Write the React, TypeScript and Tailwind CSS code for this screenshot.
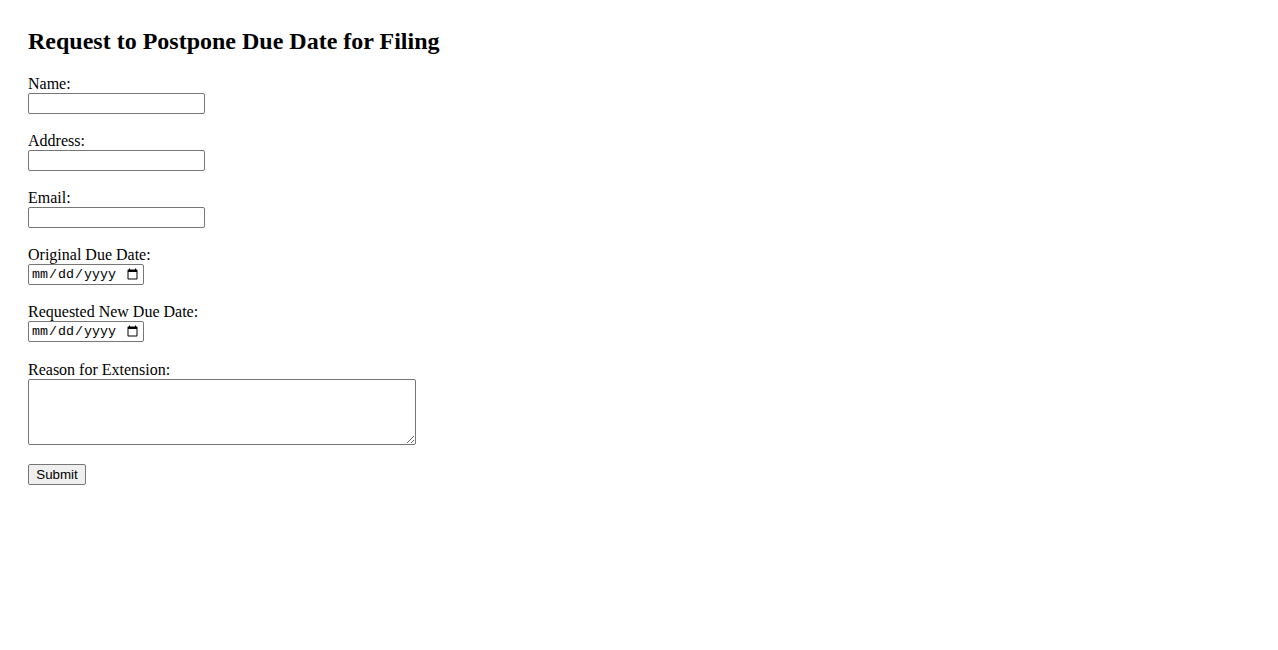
import React from "react";

export default function App() {
  const inputCls =
    "block w-[177px] h-[21px] border border-[#767676] rounded-[2px] px-[2px] py-[1px] text-[13.33px] bg-white";
  const dateCls =
    "block w-[116px] h-[21px] border border-[#767676] rounded-[2px] px-[2px] py-[1px] text-[13.33px] bg-white [font-family:'Liberation_Mono',monospace]";
  const labelCls = "block h-[18px] leading-[18px] text-[16px]";
  return (
    <div className="min-h-[650px] bg-white text-black px-[28px] pt-[27px] [font-family:'Liberation_Serif',serif]">
      <h2 className="text-[24px] font-bold leading-[28px] mb-[20px]">
        Request to Postpone Due Date for Filing
      </h2>
      <form className="flex flex-col">
        <label className={labelCls}>Name:</label>
        <input type="text" className={inputCls} />
        <div className="h-[18px]" />
        <label className={labelCls}>Address:</label>
        <input type="text" className={inputCls} />
        <div className="h-[18px]" />
        <label className={labelCls}>Email:</label>
        <input type="email" className={inputCls} />
        <div className="h-[18px]" />
        <label className={labelCls}>Original Due Date:</label>
        <input type="date" className={dateCls} />
        <div className="h-[18px]" />
        <label className={labelCls}>Requested New Due Date:</label>
        <input type="date" className={dateCls} />
        <div className="h-[19px]" />
        <label className={labelCls}>Reason for Extension:</label>
        <textarea className="block w-[388px] h-[66px] border border-[#767676] rounded-[2px] p-[2px] text-[13.33px] bg-white" />
        <div className="h-[19px]" />
        <div className="flex">
          <button
            type="button"
            className="h-[21px] w-[58px] border border-[#767676] rounded-[2px] bg-[#efefef] px-[6px] text-[13.33px] leading-[17px] [font-family:'Liberation_Sans',Arial,sans-serif]"
          >
            Submit
          </button>
        </div>
      </form>
    </div>
  );
}
